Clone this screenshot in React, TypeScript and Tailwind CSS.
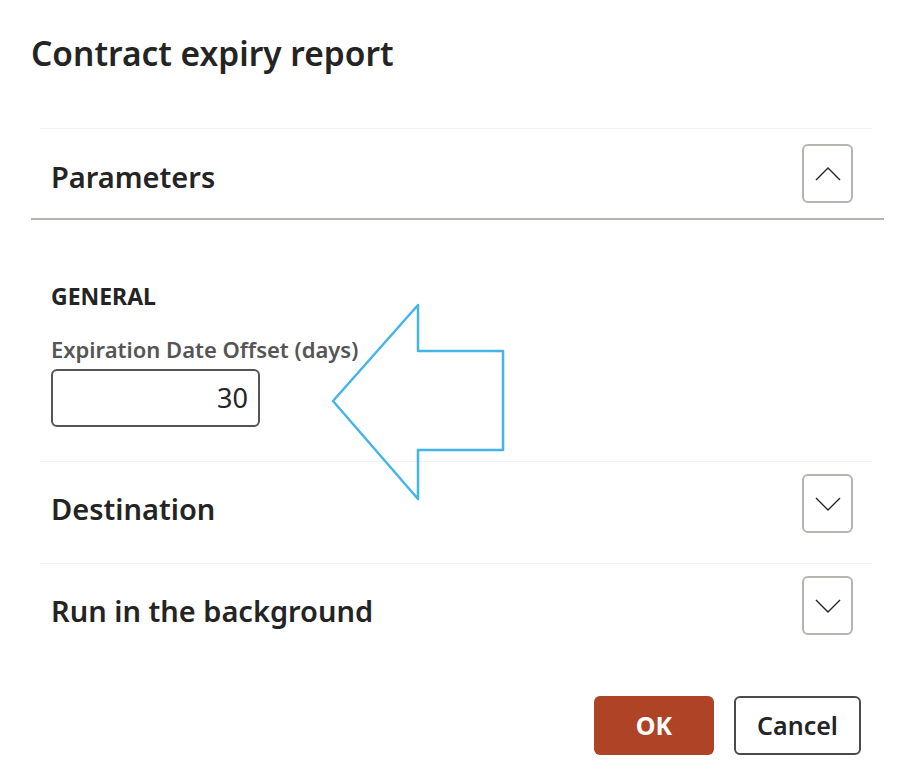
const font = { fontFamily: '"Noto Sans", "Open Sans", sans-serif' };

function Chevron({ up }: { up: boolean }) {
  return (
    <svg width="26" height="14" viewBox="0 0 26 14" fill="none">
      <polyline
        points={up ? "1,13 13,1 25,13" : "1,1 13,13 25,1"}
        stroke="#242424"
        strokeWidth="1.4"
        strokeLinejoin="miter"
      />
    </svg>
  );
}

function ToggleButton({ open }: { open: boolean }) {
  return (
    <button
      type="button"
      className="flex h-[59px] w-[51px] items-center justify-center rounded-[6px] border-2 border-[#b5b4b0] bg-white"
    >
      <Chevron up={open} />
    </button>
  );
}

function Arrow() {
  return (
    <svg
      className="pointer-events-none absolute left-[325px] top-[298px]"
      width="186"
      height="210"
      viewBox="325 298 186 210"
      fill="none"
    >
      <path
        d="M418 305 L333 401 L418 499 L418 450 L503 450 L503 351 L418 351 Z"
        stroke="#45b4ea"
        strokeWidth="2.5"
        strokeLinejoin="round"
      />
    </svg>
  );
}

export default function App() {
  return (
    <div className="relative h-[773px] w-[921px] bg-white text-[#242424]" style={font}>
      <h1 className="pl-[31px] pt-[30px] text-[33.5px] font-semibold leading-[46px]">
        Contract expiry report
      </h1>

      <div className="mt-[52px]">
        {/* Parameters */}
        <div className="ml-[40px] mr-[49px] flex h-[90px] items-center justify-between border-t border-[#f2f2f2] pl-[11px] pr-[19px]">
          <h2 className="pt-[6px] text-[29px] font-semibold">Parameters</h2>
          <ToggleButton open />
        </div>
        <div className="ml-[31px] mr-[37px] h-[2px] bg-[#b5b4b0]" />

        <div className="h-[241px] px-[51px] pt-[60px]">
          <h3 className="text-[23px] font-bold leading-[32px]">GENERAL</h3>
          <label className="mt-[22px] block text-[22px] font-semibold leading-[30px] text-[#555555]">
            Expiration Date Offset (days)
          </label>
          <div className="mt-[5px] flex h-[58px] w-[209px] items-center justify-end rounded-[6px] border-2 border-[#555555] px-[10px] text-[27px]">
            30
          </div>
        </div>

        {/* Destination */}
        <div className="ml-[40px] mr-[49px] flex h-[102px] items-start justify-between border-t border-[#f2f2f2] pl-[11px] pr-[19px] pt-[12px]">
          <h2 className="pt-[13px] text-[29px] font-semibold">Destination</h2>
          <ToggleButton open={false} />
        </div>

        {/* Run in the background */}
        <div className="ml-[40px] mr-[49px] flex h-[100px] items-start justify-between border-t border-[#f2f2f2] pl-[11px] pr-[19px] pt-[12px]">
          <h2 className="pt-[13px] text-[29px] font-semibold">Run in the background</h2>
          <ToggleButton open={false} />
        </div>
      </div>

      <div className="mt-[33px] flex justify-end gap-[20px] pr-[60px]">
        <button
          type="button"
          className="h-[59px] w-[120px] rounded-[6px] bg-[#ae4326] text-[25px] font-bold text-white"
        >
          OK
        </button>
        <button
          type="button"
          className="h-[59px] w-[127px] rounded-[6px] border-2 border-[#4a4a4a] bg-white text-[25px] font-semibold"
        >
          Cancel
        </button>
      </div>

      <Arrow />
    </div>
  );
}
